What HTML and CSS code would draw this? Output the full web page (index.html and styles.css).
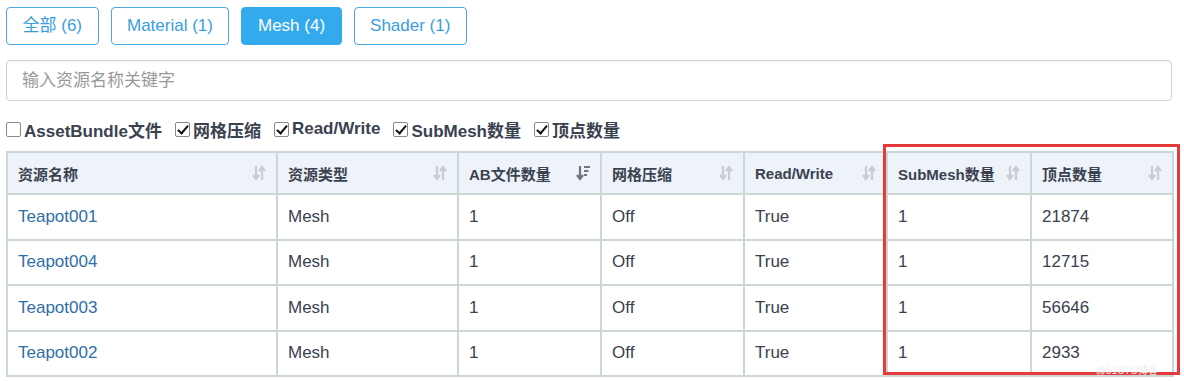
FILE: index.html
```html
<!DOCTYPE html>
<html lang="zh">
<head>
<meta charset="utf-8">
<link rel="stylesheet" href="styles.css">
</head>
<body>
<div class="page">
  <div class="tabs">
    <button class="tab">全部 (6)</button>
    <button class="tab">Material (1)</button>
    <button class="tab active">Mesh (4)</button>
    <button class="tab">Shader (1)</button>
  </div>
  <input class="search" type="text" placeholder="输入资源名称关键字">
  <div class="filters">
    <label class="chk"><span class="box"></span>AssetBundle文件</label>
    <label class="chk"><span class="box on"></span>网格压缩</label>
    <label class="chk"><span class="box on"></span>Read/Write</label>
    <label class="chk"><span class="box on"></span>SubMesh数量</label>
    <label class="chk"><span class="box on"></span>顶点数量</label>
  </div>
  <div class="table-wrap">
    <table class="grid">
      <colgroup>
        <col class="c1"><col class="c2"><col class="c3"><col class="c4"><col class="c5"><col class="c6"><col class="c7">
      </colgroup>
      <thead>
        <tr>
          <th><div class="th">资源名称<svg class="sort" viewBox="0 0 14 16"><path d="M4 1v12M1 10l3 4 3-4" /><path d="M10 15V3M7 6l3-4 3 4" /></svg></div></th>
          <th><div class="th">资源类型<svg class="sort" viewBox="0 0 14 16"><path d="M4 1v12M1 10l3 4 3-4" /><path d="M10 15V3M7 6l3-4 3 4" /></svg></div></th>
          <th><div class="th">AB文件数量<svg class="sort dark" viewBox="0 0 14 16"><path d="M4 1v12M1 10l3 4 3-4" /><path d="M8 2h6M8 6h4.5M8 10h3" /></svg></div></th>
          <th><div class="th">网格压缩<svg class="sort" viewBox="0 0 14 16"><path d="M4 1v12M1 10l3 4 3-4" /><path d="M10 15V3M7 6l3-4 3 4" /></svg></div></th>
          <th><div class="th">Read/Write<svg class="sort" viewBox="0 0 14 16"><path d="M4 1v12M1 10l3 4 3-4" /><path d="M10 15V3M7 6l3-4 3 4" /></svg></div></th>
          <th><div class="th">SubMesh数量<svg class="sort" viewBox="0 0 14 16"><path d="M4 1v12M1 10l3 4 3-4" /><path d="M10 15V3M7 6l3-4 3 4" /></svg></div></th>
          <th><div class="th">顶点数量<svg class="sort" viewBox="0 0 14 16"><path d="M4 1v12M1 10l3 4 3-4" /><path d="M10 15V3M7 6l3-4 3 4" /></svg></div></th>
        </tr>
      </thead>
      <tbody>
        <tr><td><a class="link">Teapot001</a></td><td>Mesh</td><td>1</td><td>Off</td><td>True</td><td>1</td><td>21874</td></tr>
        <tr><td><a class="link">Teapot004</a></td><td>Mesh</td><td>1</td><td>Off</td><td>True</td><td>1</td><td>12715</td></tr>
        <tr><td><a class="link">Teapot003</a></td><td>Mesh</td><td>1</td><td>Off</td><td>True</td><td>1</td><td>56646</td></tr>
        <tr><td><a class="link">Teapot002</a></td><td>Mesh</td><td>1</td><td>Off</td><td>True</td><td>1</td><td>2933</td></tr>
      </tbody>
    </table>
    <div class="highlight"></div>
    <div class="watermark">@51CTO博客</div>
  </div>
</div>
</body>
</html>
```

FILE: styles.css
```css
* { box-sizing: border-box; }
html, body { margin: 0; padding: 0; background: #fff; }
body {
  font-family: "Liberation Sans", Arial, "Noto Sans CJK SC", sans-serif;
  color: #333;
  width: 1184px;
  height: 381px;
  overflow: hidden;
}
.page {
  padding: 7px 12px 0 6px;
}
.tabs {
  display: flex;
  gap: 12px;
  height: 38px;
}
.tab {
  font-family: inherit;
  font-size: 17px;
  color: #3a9ee0;
  background: #fff;
  border: 1px solid #4aa8e4;
  border-radius: 4px;
  padding: 0 15.5px;
  height: 38px;
  line-height: 36px;
}
.tab.active {
  background: #33aaec;
  border-color: #33aaec;
  color: #fff;
}
.search {
  display: block;
  margin-top: 15px;
  width: 1166px;
  height: 41px;
  border: 1px solid #d0d0d0;
  border-radius: 4px;
  padding: 0 15px;
  font-family: inherit;
  font-size: 17px;
  color: #333;
  box-shadow: inset 0 1px 1px rgba(0,0,0,0.04);
}
.search::placeholder { color: #999; }
.filters {
  display: flex;
  gap: 13px;
  margin-top: 17px;
  height: 22px;
  align-items: center;
}
.chk {
  display: flex;
  align-items: center;
  font-size: 17px;
  font-weight: bold;
  color: #3a4250;
}
.box {
  width: 15px;
  height: 15px;
  border: 1px solid #888;
  border-radius: 2px;
  margin-right: 3px;
  position: relative;
  background: #fff;
}
.box.on::after {
  content: "";
  position: absolute;
  left: 4px;
  top: 0px;
  width: 4px;
  height: 9px;
  border: solid #111;
  border-width: 0 2.5px 2.5px 0;
  transform: rotate(40deg);
}
.table-wrap {
  position: relative;
  margin-top: 11px;
}
.grid {
  width: 1166px;
  border-collapse: collapse;
  table-layout: fixed;
  border: 2px solid #cbd6d6;
}
.c1 { width: 270px; }
.c2 { width: 181px; }
.c3 { width: 143px; }
.c4 { width: 143px; }
.c5 { width: 143px; }
.c6 { width: 144px; }
.c7 { width: 142px; }
.grid th, .grid td {
  border: 2px solid #cbd6d6;
  text-align: left;
  padding: 0 10px;
}
.grid th {
  background: #eef2f9;
  height: 42px;
  font-size: 15px;
  font-weight: bold;
  color: #3a4250;
}
.th {
  display: flex;
  align-items: center;
  justify-content: space-between;
}
.sort {
  width: 14px;
  height: 16px;
  fill: none;
  stroke: #c8cdd4;
  stroke-width: 2.2;
}
.sort.dark { stroke: #6e7580; }
.grid td {
  height: 45.5px;
  font-size: 17px;
  color: #3b4150;
}
.link {
  color: #2f6ea8;
  text-decoration: none;
}
.highlight {
  position: absolute;
  left: 877px;
  top: -7px;
  width: 297px;
  height: 231px;
  border: 3px solid #e43a3c;
  pointer-events: none;
}
.watermark {
  position: absolute;
  right: 14px;
  bottom: 0px;
  font-size: 10px;
  color: #efefef;
}
```
